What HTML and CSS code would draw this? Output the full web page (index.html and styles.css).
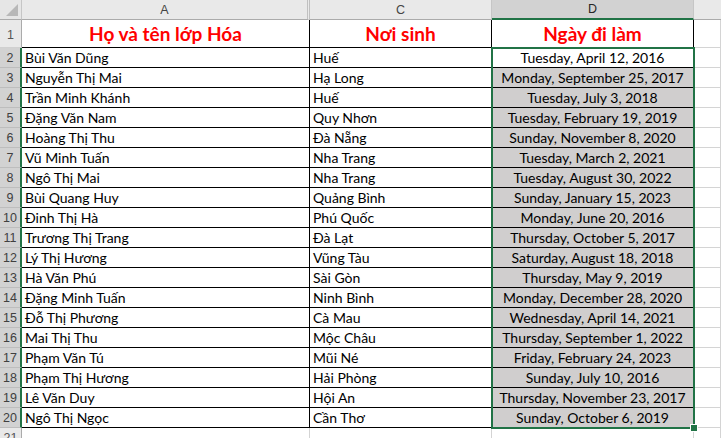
FILE: index.html
```html
<!DOCTYPE html>
<html>
<head>
<meta charset="utf-8">
<link rel="stylesheet" href="styles.css">
</head>
<body>
<div class="sheet">
  <div class="grid" id="grid">
    <div class="corner"><span class="tri"></span></div>
    <div class="colhead colhead-a">A</div>
    <div class="colhead colhead-c">C</div>
    <div class="colhead colhead-d sel">D</div>
    <div class="colhead colhead-e"></div>

    <div class="rowhead r1">1</div>
    <div class="cell t title">Họ và tên lớp Hóa</div>
    <div class="cell t title">Nơi sinh</div>
    <div class="cell t title">Ngày đi làm</div>
    <div class="cell g"></div>

    <div class="rowhead sel">2</div><div class="cell t">Bùi Văn Dũng</div><div class="cell t">Huế</div><div class="cell t date white">Tuesday, April 12, 2016</div><div class="cell g"></div>
    <div class="rowhead sel">3</div><div class="cell t">Nguyễn Thị Mai</div><div class="cell t">Hạ Long</div><div class="cell t date">Monday, September 25, 2017</div><div class="cell g"></div>
    <div class="rowhead sel">4</div><div class="cell t">Trần Minh Khánh</div><div class="cell t">Huế</div><div class="cell t date">Tuesday, July 3, 2018</div><div class="cell g"></div>
    <div class="rowhead sel">5</div><div class="cell t">Đặng Văn Nam</div><div class="cell t">Quy Nhơn</div><div class="cell t date">Tuesday, February 19, 2019</div><div class="cell g"></div>
    <div class="rowhead sel">6</div><div class="cell t">Hoàng Thị Thu</div><div class="cell t">Đà Nẵng</div><div class="cell t date">Sunday, November 8, 2020</div><div class="cell g"></div>
    <div class="rowhead sel">7</div><div class="cell t">Vũ Minh Tuấn</div><div class="cell t">Nha Trang</div><div class="cell t date">Tuesday, March 2, 2021</div><div class="cell g"></div>
    <div class="rowhead sel">8</div><div class="cell t">Ngô Thị Mai</div><div class="cell t">Nha Trang</div><div class="cell t date">Tuesday, August 30, 2022</div><div class="cell g"></div>
    <div class="rowhead sel">9</div><div class="cell t">Bùi Quang Huy</div><div class="cell t">Quảng Bình</div><div class="cell t date">Sunday, January 15, 2023</div><div class="cell g"></div>
    <div class="rowhead sel">10</div><div class="cell t">Đinh Thị Hà</div><div class="cell t">Phú Quốc</div><div class="cell t date">Monday, June 20, 2016</div><div class="cell g"></div>
    <div class="rowhead sel">11</div><div class="cell t">Trương Thị Trang</div><div class="cell t">Đà Lạt</div><div class="cell t date">Thursday, October 5, 2017</div><div class="cell g"></div>
    <div class="rowhead sel">12</div><div class="cell t">Lý Thị Hương</div><div class="cell t">Vũng Tàu</div><div class="cell t date">Saturday, August 18, 2018</div><div class="cell g"></div>
    <div class="rowhead sel">13</div><div class="cell t">Hà Văn Phú</div><div class="cell t">Sài Gòn</div><div class="cell t date">Thursday, May 9, 2019</div><div class="cell g"></div>
    <div class="rowhead sel">14</div><div class="cell t">Đặng Minh Tuấn</div><div class="cell t">Ninh Bình</div><div class="cell t date">Monday, December 28, 2020</div><div class="cell g"></div>
    <div class="rowhead sel">15</div><div class="cell t">Đỗ Thị Phương</div><div class="cell t">Cà Mau</div><div class="cell t date">Wednesday, April 14, 2021</div><div class="cell g"></div>
    <div class="rowhead sel">16</div><div class="cell t">Mai Thị Thu</div><div class="cell t">Mộc Châu</div><div class="cell t date">Thursday, September 1, 2022</div><div class="cell g"></div>
    <div class="rowhead sel">17</div><div class="cell t">Phạm Văn Tú</div><div class="cell t">Mũi Né</div><div class="cell t date">Friday, February 24, 2023</div><div class="cell g"></div>
    <div class="rowhead sel">18</div><div class="cell t">Phạm Thị Hương</div><div class="cell t">Hải Phòng</div><div class="cell t date">Sunday, July 10, 2016</div><div class="cell g"></div>
    <div class="rowhead sel">19</div><div class="cell t">Lê Văn Duy</div><div class="cell t">Hội An</div><div class="cell t date">Thursday, November 23, 2017</div><div class="cell g"></div>
    <div class="rowhead sel">20</div><div class="cell t">Ngô Thị Ngọc</div><div class="cell t">Cần Thơ</div><div class="cell t date">Sunday, October 6, 2019</div><div class="cell g"></div>

    <div class="rowhead r21">21</div><div class="cell g"></div><div class="cell g"></div><div class="cell g"></div><div class="cell g"></div>
  </div>
  <div class="selection"><span class="handle"></span></div>
</div>
</body>
</html>
```

FILE: styles.css
```css
html, body {
  margin: 0;
  padding: 0;
  background: #ffffff;
  overflow: hidden;
}
.sheet {
  position: relative;
  width: 721px;
  height: 438px;
  overflow: hidden;
  font-family: "Lato", "Liberation Sans", sans-serif;
}
.grid {
  display: grid;
  grid-template-columns: 22px 288px 182px 202px 1fr;
  grid-template-rows: 20px 28px repeat(19, 20px) 20px;
}
.grid > div {
  box-sizing: border-box;
}
.corner {
  background: #e6e6e6;
  border-right: 1px solid #c6c6c6;
  border-bottom: 1px solid #ababab;
  position: relative;
}
.tri {
  position: absolute;
  right: 3px;
  bottom: 3px;
  width: 0;
  height: 0;
  border-left: 12px solid transparent;
  border-bottom: 12px solid #b8b8b8;
}
.colhead {
  background: #e9e9e9;
  color: #444444;
  font-family: "Liberation Sans", sans-serif;
  font-size: 12.5px;
  display: flex;
  align-items: center;
  justify-content: center;
  border-right: 1px solid #c6c6c6;
  border-bottom: 1px solid #ababab;
}
.colhead-a {
  border-right: 3px double #c0c0c0;
}
.colhead.sel {
  background: #d2d2d2;
  color: #262626;
  border-bottom: 2px solid #217346;
}
.colhead-e {
  border-right: none;
}
.rowhead {
  background: #e9e9e9;
  color: #555555;
  font-family: "Liberation Sans", sans-serif;
  font-size: 12.5px;
  display: flex;
  align-items: flex-end;
  justify-content: center;
  padding-bottom: 2px;
  border-right: 1px solid #ababab;
  border-bottom: 1px solid #d0d0d0;
}
.rowhead.r1 {
  padding-bottom: 5px;
}
.rowhead.sel {
  background: #d2d2d2;
  color: #404040;
  border-right: 2px solid #217346;
  border-bottom: 1px solid #bdbdbd;
}
.cell {
  font-size: 14px;
  color: #000000;
  white-space: nowrap;
  overflow: hidden;
  display: flex;
  align-items: flex-end;
  padding: 0 3px 1px 3px;
}
.cell.g {
  border-right: 1px solid #d4d4d4;
  border-bottom: 1px solid #d4d4d4;
}
.cell.t {
  border-right: 1px solid #000000;
  border-bottom: 1px solid #000000;
}
.title {
  color: #ff0000;
  font-weight: 700;
  font-size: 19px;
  justify-content: center;
  padding-bottom: 2px;
}
.date {
  justify-content: center;
  background: #d0cece;
}
.date.white {
  background: #ffffff;
}
.selection {
  position: absolute;
  left: 491px;
  top: 47px;
  width: 204px;
  height: 382px;
  box-sizing: border-box;
  border: 2px solid #217346;
  pointer-events: none;
}
.handle {
  position: absolute;
  right: -5px;
  bottom: -5px;
  width: 6px;
  height: 6px;
  background: #217346;
  border: 1px solid #ffffff;
}
```
